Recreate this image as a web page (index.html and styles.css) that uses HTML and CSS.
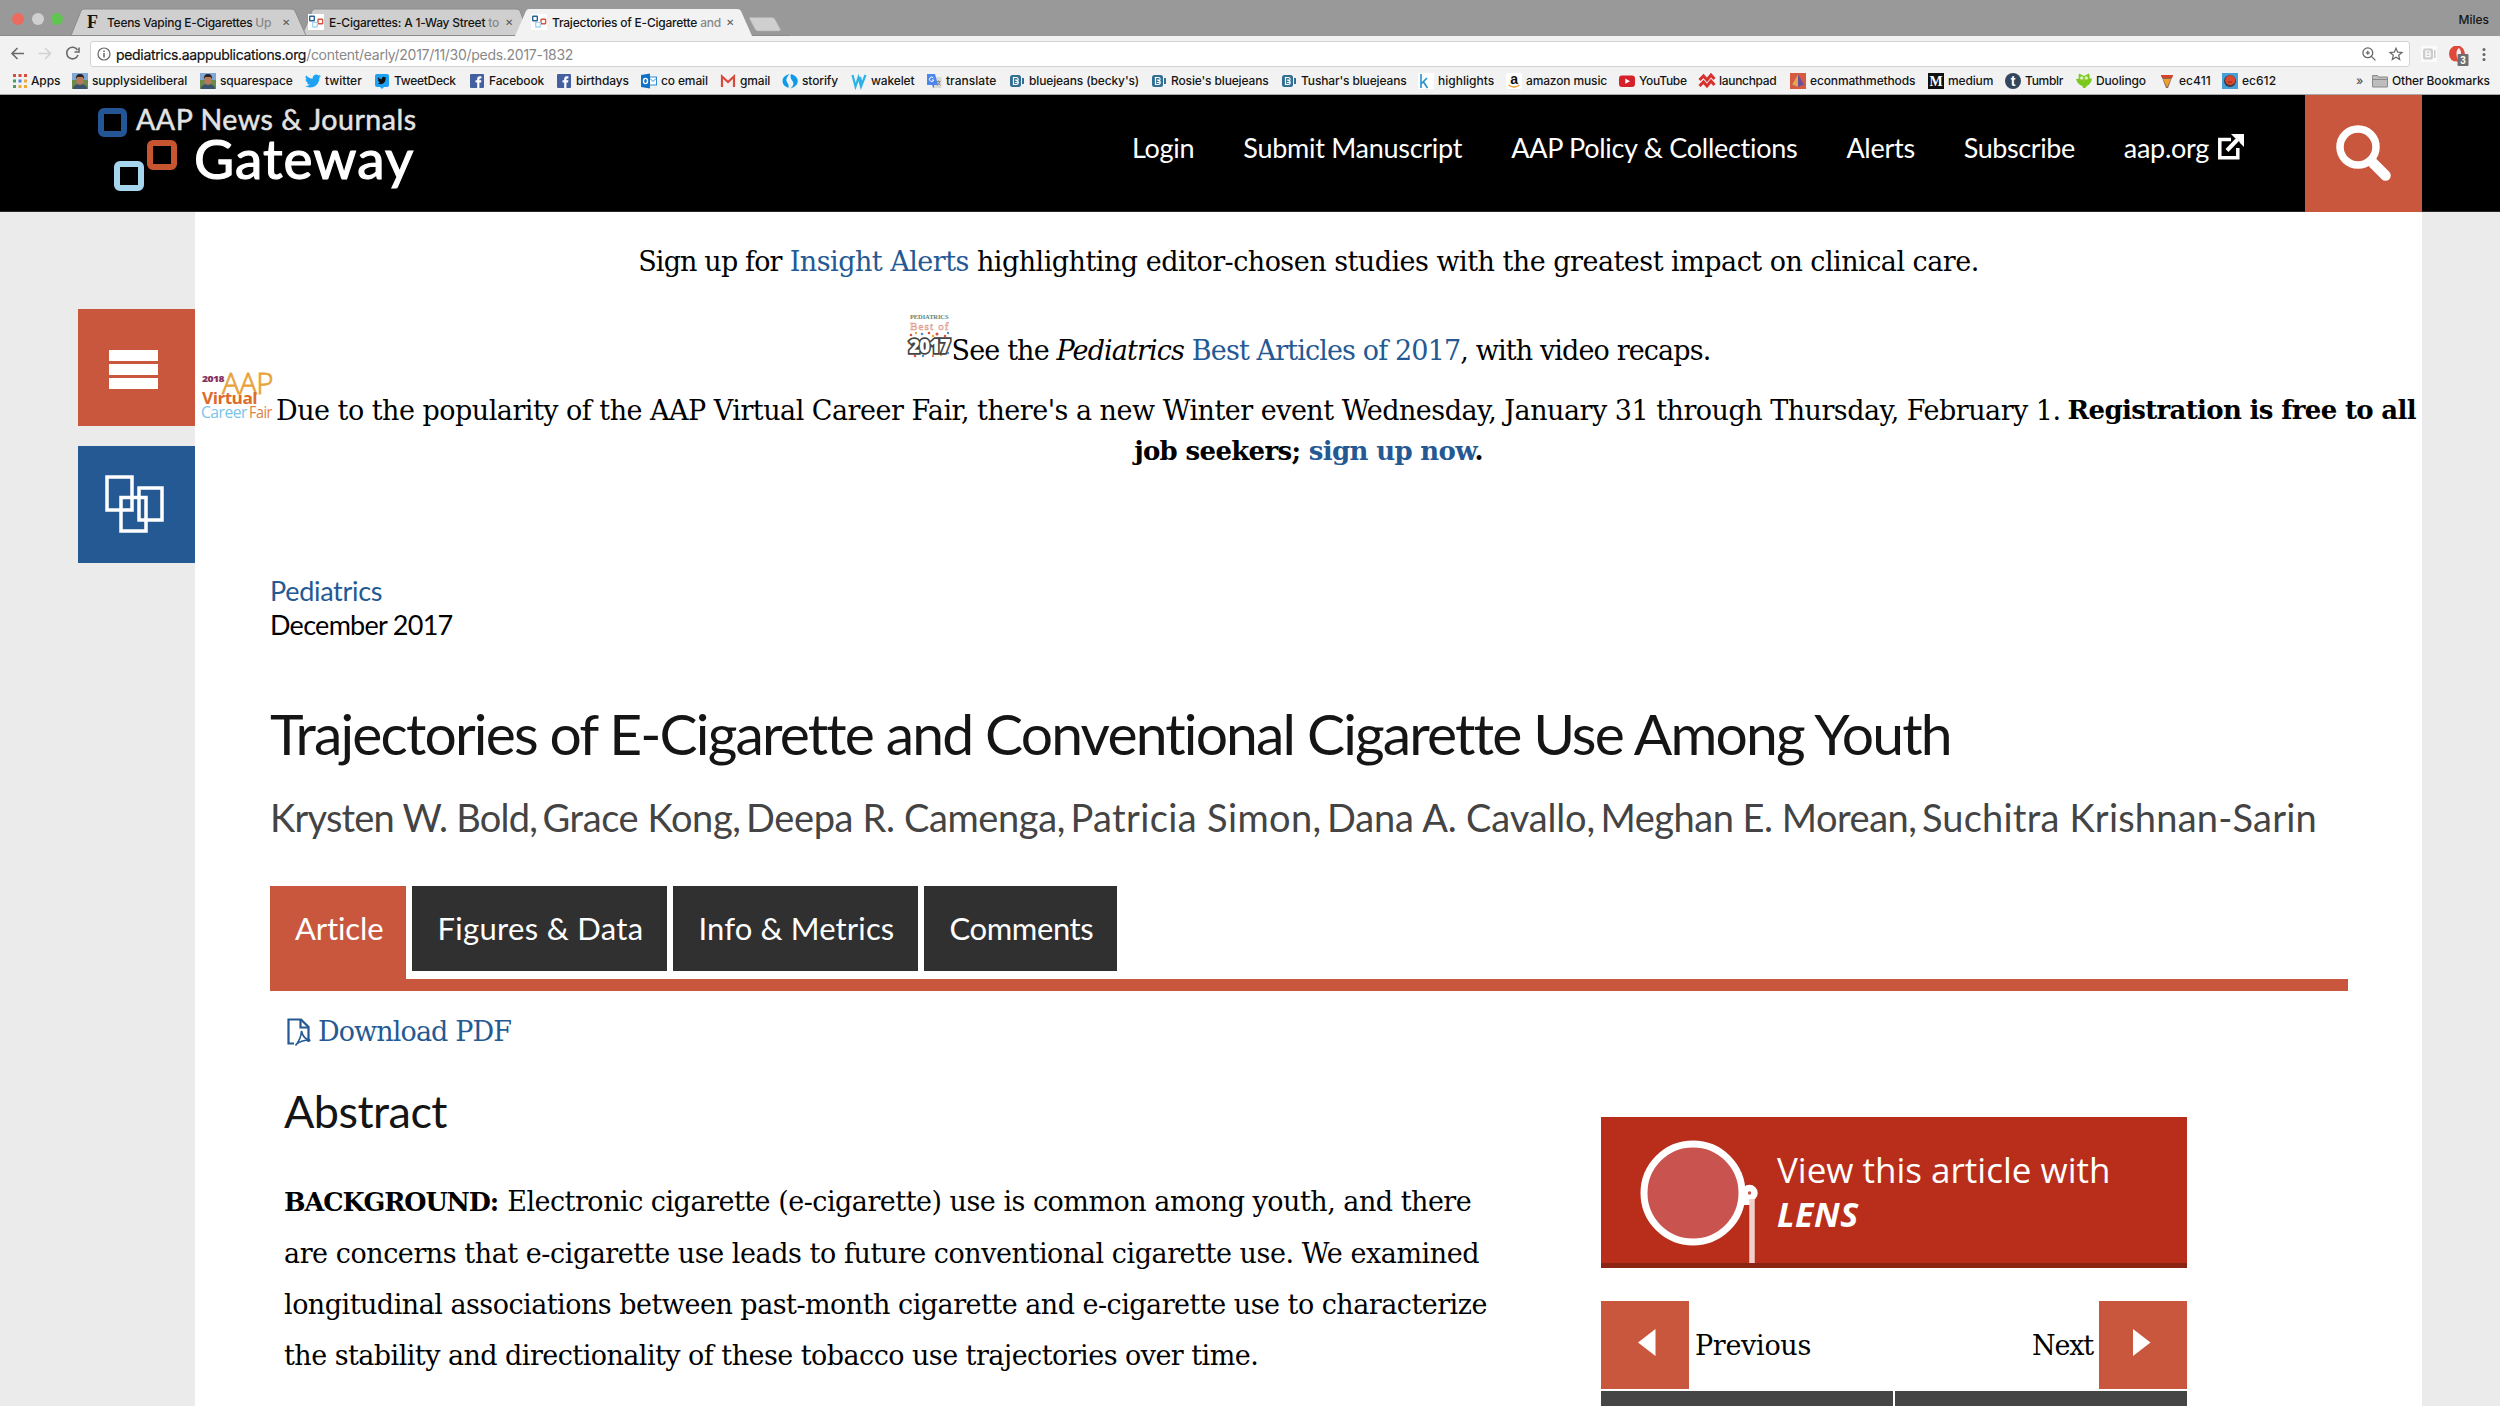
FILE: index.html
```html
<!DOCTYPE html>
<html lang="en">
<head>
<meta charset="utf-8">
<title>Trajectories of E-Cigarette and Conventional Cigarette Use Among Youth</title>
<link rel="stylesheet" href="styles.css">
</head>
<body>
<svg class="defs" width="0" height="0">
  <defs>
    <symbol id="aap" viewBox="0 0 16 16"><rect width="16" height="16" fill="#fff"/><g fill="none" stroke-width="1.4"><rect x="1.7" y="2.2" width="4.6" height="4.6" rx=".5" stroke="#2b6295"/><rect x="10" y="5.2" width="4.6" height="4.6" rx=".5" stroke="#d8543c"/><rect x="4.7" y="8.4" width="4.6" height="4.6" rx=".5" stroke="#a5d8ee"/></g></symbol>
    <symbol id="photo" viewBox="0 0 16 16"><rect width="16" height="9" fill="#7fa8d8"/><rect y="7" width="16" height="9" fill="#6d8a4c"/><path d="M1 16q0-5 7-5t7 5z" fill="#39566e"/><ellipse cx="8" cy="7" rx="3.7" ry="5" fill="#b57a5c"/><path d="M3.8 6.500Q3.500 1 8 1t4.200 5.500L10.800 4H5.200z" fill="#2c2421"/></symbol>
    <symbol id="fb" viewBox="0 0 16 16"><rect x="1" y="1" width="14" height="14" rx="1" fill="#4460a0"/><path d="M8.200 15V9.500H6.500V7.300h1.700V5.800q0-2.500 2.600-2.500h1.600v2.100h-1.200q-.8 0-.8.9v1h2l-.3 2.200h-1.700V15z" fill="#fff"/></symbol>
    <symbol id="bird" viewBox="0 0 24 24"><path d="M23.950 4.600a10 10 0 0 1-2.800.8 4.900 4.900 0 0 0 2.100-2.700 9.800 9.800 0 0 1-3.100 1.200 4.900 4.900 0 0 0-8.400 4.500A14 14 0 0 1 1.600 3.200a4.900 4.900 0 0 0 1.500 6.500 4.900 4.900 0 0 1-2.200-.6v.1a4.900 4.900 0 0 0 4 4.800 5 5 0 0 1-2.200.1 4.900 4.900 0 0 0 4.600 3.400A9.900 9.900 0 0 1 0 19.500 14 14 0 0 0 7.500 21.700c9.100 0 14-7.500 14-14v-.6a10 10 0 0 0 2.450-2.500z"/></symbol>
    <symbol id="bj" viewBox="0 0 16 16"><rect x="1" y="2" width="11" height="12" rx="2.500" fill="#336f94"/><rect x="13" y="5" width="2" height="6" fill="#336f94"/><path d="M4.500 4.500h3a1.500 1.700 0 0 1 .6 3.300 1.700 1.900 0 0 1-.6 3.700h-3zM6 7h2M6 9.500h2.500" fill="none" stroke="#fff" stroke-width="1.200"/></symbol>
  </defs>
</svg>

<div class="tabstrip">
  <div class="lights"><i class="light red"></i><i class="light gray"></i><i class="light green"></i></div>
  <svg class="tabshapes" width="790" height="36" viewBox="0 0 790 36">
    <path d="M299 35.500C303 34 304 30 306 26L312 11q1-2 3-2H516q3 0 4 2l9 24.500z" fill="#cfcfcf" stroke="#8c8c8c"/>
    <path d="M71 35.500L81 11q1-2 3-2H291q3 0 4 2l11 24.500z" fill="#cfcfcf" stroke="#8c8c8c"/>
    <path d="M0 35.500H790" stroke="#8a8a8a"/>
    <path d="M515 36L526 11q1-2 3-2H737q3 0 4 2l11 25z" fill="#f2f2f2"/>
    <path d="M750 17.500h22q2 0 3 2l5 9q1 2.500-1 2.500h-21q-2 0-3-2l-5-9.500q-1-2 0-2z" fill="#cfcfcf" stroke="#b0b0b0" stroke-width=".6"/>
  </svg>
  <div class="tab t1"><span class="ff">F</span><span class="tt">Teens Vaping E-Cigarettes <em>Up</em></span><span class="x">✕</span></div>
  <div class="tab t2"><svg width="16" height="16"><use href="#aap"/></svg><span class="tt">E-Cigarettes: A 1-Way Street <em>to</em></span><span class="x">✕</span></div>
  <div class="tab t3"><svg width="16" height="16"><use href="#aap"/></svg><span class="tt">Trajectories of E-Cigarette <em>and</em></span><span class="x">✕</span></div>
  <span class="user">Miles</span>
</div>

<div class="toolbar">
  <svg class="navicons" width="90" height="30" viewBox="0 0 90 30" fill="none" stroke-width="1.600">
    <path d="M24 17.500H12.500M17.500 12l-5.500 5.500 5.500 5.500" stroke="#6a6a6a"/>
    <path d="M38.500 17.500H50M45 12l5.500 5.500L45 23" stroke="#d2d2d2"/>
    <path d="M77.500 14A5.800 5.800 0 1 0 78 19M79 11.500v4.500h-4.500" stroke="#6a6a6a"/>
  </svg>
  <div class="omnibox">
    <svg width="14" height="14" viewBox="0 0 14 14" fill="none" stroke="#666" stroke-width="1.200"><circle cx="7" cy="7" r="6"/><path d="M7 6v4.500M7 3.500v1.500" stroke-width="1.500"/></svg>
    <span class="url"><b>pediatrics.aappublications.org</b>/content/early/2017/11/30/peds.2017-1832</span>
    <svg class="zoomi" width="14" height="14" viewBox="0 0 14 14" fill="none" stroke="#666" stroke-width="1.300"><circle cx="5.800" cy="5.800" r="4.900"/><path d="M9.400 9.400l4 4M5.800 3.800v4M3.800 5.800h4"/></svg>
    <svg class="star" width="14" height="14" viewBox="0 0 14 14" fill="none" stroke="#666" stroke-width="1.200"><path d="M7 1.200l1.700 4 4.300.3-3.300 2.800 1 4.200L7 10.200l-3.700 2.300 1-4.200L1 5.500l4.300-.3z"/></svg>
  </div>
  <svg class="ext" width="80" height="24" viewBox="0 0 80 24">
    <rect x="9" y="4" width="16" height="16" fill="#fbfbfb"/><rect x="11" y="6.500" width="10" height="11" rx="2" fill="#ccc"/><rect x="22" y="8" width="1.600" height="8" fill="#ccc"/><path d="M14 9h3a1 1.300 0 0 1 0 2.800h-3zM14 11.800h3.300a1 1.300 0 0 1 0 2.800H14z" fill="none" stroke="#fff" stroke-width="1.200"/>
    <path d="M42 4h6q4.500 2.500 5 8h-4q0-4-1.800-6-2.700 1-2.700 5.500 0 6 3 8-10 1-10.500-7.500 0-5.500 5-8z" fill="#e0483a"/><rect x="45.500" y="12" width="11" height="12" rx="1" fill="#6e6e6e"/><text x="51" y="21.500" font-family="Liberation Sans" font-weight="700" font-size="10" fill="#fff" text-anchor="middle">3</text>
    <circle cx="72" cy="7.500" r="1.500" fill="#666"/><circle cx="72" cy="12.500" r="1.500" fill="#666"/><circle cx="72" cy="17.500" r="1.500" fill="#666"/>
  </svg>
</div>

<div class="bookmarks">
  <span class="bm"><svg viewBox="0 0 16 16"><g fill="#dc4a3d"><path d="M1 1h3v3H1zM6.500 1h3v3h-3zM12 1h3v3h-3z"/></g><path d="M1 6.500h3v3H1z" fill="#4a9d5f"/><path d="M6.500 6.500h3v3h-3z" fill="#4a86e8"/><path d="M12 6.500h3v3h-3zM12 12h3v3h-3zM6.500 12h3v3h-3z" fill="#e9a93c"/><path d="M1 12h3v3H1z" fill="#4a9d5f"/></svg>Apps</span>
  <span class="bm"><svg viewBox="0 0 16 16"><use href="#photo"/></svg>supplysideliberal</span>
  <span class="bm"><svg viewBox="0 0 16 16"><use href="#photo"/></svg>squarespace</span>
  <span class="bm wide"><svg viewBox="0 0 16 16" fill="#1da1f2"><use href="#bird"/></svg>twitter</span>
  <span class="bm tight"><svg viewBox="0 0 16 16"><path d="M3 1h10q2 0 2 2v9q0 2-2 2h-3l-2 2-2-2H3q-2 0-2-2V3q0-2 2-2z" fill="#1da1f2"/><use href="#bird" x="3.500" y="3" width="9" height="9" fill="#111"/></svg>TweetDeck</span>
  <span class="bm"><svg viewBox="0 0 16 16"><use href="#fb"/></svg>Facebook</span>
  <span class="bm"><svg viewBox="0 0 16 16"><use href="#fb"/></svg>birthdays</span>
  <span class="bm"><svg viewBox="0 0 16 16"><rect x="8" y="4" width="7.500" height="8" fill="#fff" stroke="#2a8ad4"/><path d="M9 5.500l3 3 3-3" fill="none" stroke="#2a8ad4"/><path d="M0 2l9-1.500v15L0 14z" fill="#0f72c6"/><ellipse cx="4.500" cy="8" rx="2" ry="2.600" fill="none" stroke="#fff" stroke-width="1.400"/></svg>co email</span>
  <span class="bm"><svg viewBox="0 0 16 16"><rect x="1" y="3" width="14" height="11" fill="#f4f0f0"/><path d="M2 14V3.500L8 9l6-5.500V14" fill="none" stroke="#d54b3d" stroke-width="2.200"/></svg>gmail</span>
  <span class="bm"><svg viewBox="0 0 16 16" fill="#0f9bea"><path d="M7.500 1Q0 3 .5 8.500 1 13 6.500 15q1-3-1-5Q2.500 6 7.500 1zM9 1q7 2 6.800 7.500Q15.500 13 8.500 15.500q4.500-4 2-7.500Q7.500 4.500 9 1z"/></svg>storify</span>
  <span class="bm"><svg viewBox="0 0 16 16" fill="none" stroke="#2cb2e6" stroke-width="2.200"><path d="M1.500 2l3 11.500 3-9 2.500 9L14.500 2M9 4l2 8"/></svg>wakelet</span>
  <span class="bm wide"><svg viewBox="0 0 16 16"><rect x="6" y="4" width="9.500" height="11" fill="#d9d9d9"/><path d="M1 1h8l3 11H6l2 3.500V12H1z" fill="#4c86ee"/><path d="M7.300 4.800A2.200 2.200 0 1 0 7.800 7H6" stroke="#fff" fill="none"/><path d="M10.500 8.500h4M12.500 7.500v1M14 8.500q-1 3-3 4M11.500 9.500l3 3" stroke="#777" fill="none" stroke-width=".8"/></svg>translate</span>
  <span class="bm"><svg viewBox="0 0 16 16"><use href="#bj"/></svg>bluejeans (becky's)</span>
  <span class="bm"><svg viewBox="0 0 16 16"><use href="#bj"/></svg>Rosie's bluejeans</span>
  <span class="bm"><svg viewBox="0 0 16 16"><use href="#bj"/></svg>Tushar's bluejeans</span>
  <span class="bm wide k"><svg viewBox="0 0 16 16"><rect width="16" height="16" fill="#fff"/><path d="M3 1v14M3.500 10.500L9 5M5.500 9l4 6" stroke="#2393cf" stroke-width="1.600" fill="none"/></svg>highlights</span>
  <span class="bm"><svg viewBox="0 0 16 16"><rect width="16" height="16" rx="2" fill="#fff"/><text x="8" y="10.500" font-size="14" font-weight="700" font-family="Liberation Sans" text-anchor="middle" fill="#111">a</text><path d="M2.500 12q5.500 4 11 0" stroke="#f29a1f" stroke-width="1.500" fill="none"/></svg>amazon music</span>
  <span class="bm tight"><svg viewBox="0 0 16 16"><rect y="2.500" width="16" height="11.500" rx="3" fill="#d5222a"/><path d="M6.300 5.500v5.300L11 8.200z" fill="#fff"/></svg>YouTube</span>
  <span class="bm tight"><svg viewBox="0 0 16 16" fill="none" stroke="#d8302d" stroke-width="3"><path d="M.5 7l4-4 3.500 4 4-5 3.500 4M.5 13l4-4 3.500 4 4-5 3.500 4"/></svg>launchpad</span>
  <span class="bm"><svg viewBox="0 0 16 16"><rect width="16" height="16" fill="#d65a40"/><path d="M8 1.500l6 10L8 14l-6-2.500z" fill="#6a4fa0"/><path d="M8 1.500L2 11.500 8 14z" fill="#e9a447"/></svg>econmathmethods</span>
  <span class="bm"><svg viewBox="0 0 16 16"><rect width="16" height="16" fill="#111"/><text x="8" y="13" font-size="14" font-weight="700" font-family="Liberation Serif" text-anchor="middle" fill="#fff">M</text></svg>medium</span>
  <span class="bm tight"><svg viewBox="0 0 16 16"><circle cx="8" cy="8" r="8" fill="#35465c"/><text x="8" y="13" font-size="14" font-weight="700" font-family="Liberation Sans" text-anchor="middle" fill="#fff">t</text></svg>Tumblr</span>
  <span class="bm"><svg viewBox="0 0 16 16"><path d="M3 .5L8 3l5-2.500q1 2.500.5 5L16 5.500Q15 11 11.500 12.500L9 15H7l-.5-2Q1.500 11.500 0 6l3-.5Q2 3 3 .5z" fill="#79c91e"/><circle cx="5.700" cy="5" r="1.800" fill="#d9f2b8"/><circle cx="10.300" cy="5" r="1.800" fill="#d9f2b8"/><path d="M7 6.500h2L8 8.500z" fill="#f5a623"/></svg>Duolingo</span>
  <span class="bm wide"><svg viewBox="0 0 16 16"><path d="M2 2h12L9 15H7z" fill="#8a6a55"/><path d="M4 6h8l-4 8z" fill="#f0a030"/><path d="M2 2h12l-1 3H3z" fill="#d5432e"/></svg>ec411</span>
  <span class="bm wide"><svg viewBox="0 0 16 16"><rect width="16" height="16" fill="#45a0d8"/><circle cx="8" cy="8" r="6" fill="#3a3a48"/><circle cx="8.300" cy="7.300" r="5" fill="#d9472c"/><path d="M6 9h4" stroke="#8c2a1c"/></svg>ec612</span>
  <span class="more">»</span>
  <span class="bm"><svg viewBox="0 0 16 16"><path d="M.5 4.500v-2h5l1 1.500h9v10H.5z" fill="#bdbdbd" stroke="#8a8a8a"/><path d="M.5 6.500h15" stroke="#8a8a8a"/></svg>Other Bookmarks</span>
</div>

<header class="site">
  <a class="logo">
    <svg width="90" height="94" viewBox="0 0 90 94" fill="none" stroke-width="6"><rect x="8" y="10" width="23" height="23" rx="3" stroke="#245595"/><rect x="57" y="42" width="24" height="24" rx="3" stroke="#c7552f"/><rect x="24" y="63" width="24" height="24" rx="3" stroke="#a6d5ee"/></svg>
    <span class="l1">AAP News &amp; Journals</span>
    <span class="l2">Gateway</span>
  </a>
  <nav>
    <a>Login</a><a>Submit Manuscript</a><a>AAP Policy &amp; Collections</a><a>Alerts</a><a class="sub">Subscribe</a><a>aap.org</a>
    <svg width="28" height="28" viewBox="0 0 28 28" fill="none" stroke="#fff" stroke-width="3.500"><path d="M14 6.500H2.800v18.200h18V15"/><path d="M10 17.500L21 6" stroke-width="4"/><path d="M14 1h13v13l-4-4-2-4-3-1z" fill="#fff" stroke="none"/></svg>
  </nav>
  <button class="search"><svg width="60" height="60" viewBox="0 0 60 60" fill="none" stroke="#fff"><circle cx="24" cy="24" r="18" stroke-width="7.500"/><path d="M38 39l13.500 13.500" stroke-width="10.500" stroke-linecap="round"/></svg></button>
</header>

<div class="body">
  <aside>
    <button class="side menu"><svg width="49" height="39" fill="#fff"><path d="M0 0h49v11H0zM0 14h49v11H0zM0 28h49v11H0z"/></svg></button>
    <button class="side stack"><svg width="58" height="60" viewBox="0 0 58 60" fill="none" stroke="#fff" stroke-width="3.500"><path d="M2 2h25v33H2zM16 22.500h25V56H16zM34 13h23v32H34z"/></svg></button>
  </aside>
  <main>
    <div class="banner">
      <p class="n1"><span class="sign">Sign up for</span><a>Insight Alerts</a><span>highlighting editor-chosen studies with the greatest impact on clinical care.</span></p>
      <p class="n2">
        <svg width="45" height="46" viewBox="0 0 45 46"><text x="22" y="6" font-size="6.500" font-family="Liberation Serif" fill="#5f8377" text-anchor="middle" textLength="38" font-weight="700">PEDIATRICS</text><text x="22" y="17" font-size="11" font-family="Liberation Serif" text-anchor="middle" fill="#fff" stroke="#dc9a8a" stroke-width=".6" textLength="38">Best of</text><g fill="#dc5040"><circle cx="4" cy="22" r="1.300"/><circle cx="22" cy="20" r="1.300"/><circle cx="30" cy="21" r="1.500"/><circle cx="38" cy="23" r="1.300"/><circle cx="8" cy="43" r="1.300"/><circle cx="26" cy="43" r="1"/></g><g fill="#e9a23a"><circle cx="9" cy="20" r="1.200"/><circle cx="26" cy="23" r="1.300"/><circle cx="2" cy="30" r="1.300"/><circle cx="34" cy="42" r="1.200"/></g><g fill="#4a90d0"><circle cx="15" cy="21" r="1.300"/><circle cx="41" cy="20" r="1.200"/><circle cx="3" cy="38" r="1.300"/><circle cx="16" cy="43" r="1.200"/><circle cx="41" cy="40" r="1.200"/></g><text x="22.500" y="39.500" font-size="19" font-family="Open Sans" font-weight="800" fill="#fff" stroke="#444" stroke-width="3.500" paint-order="stroke" text-anchor="middle" textLength="41" lengthAdjust="spacingAndGlyphs">2017</text></svg><span class="see">See the <i>Pediatrics</i> <a>Best Articles of 2017</a>, with video recaps.</span>
      </p>
      <p class="n3">
        <svg width="72" height="47" viewBox="0 0 72 47"><text x="1" y="10" font-size="9.500" font-family="Open Sans" font-weight="800" fill="#86325f" textLength="22" lengthAdjust="spacingAndGlyphs">2018</text><text x="21" y="22" font-size="29" font-family="Open Sans" font-weight="300" fill="#e8a33c" stroke="#e8a33c" stroke-width=".8" textLength="51" lengthAdjust="spacingAndGlyphs">AAP</text><text x="1" y="32" font-size="16" font-family="Open Sans" font-weight="700" fill="#dd6b2a" textLength="55" lengthAdjust="spacingAndGlyphs">Virtual</text><text x="0" y="46" font-size="16.500" font-family="Open Sans" fill="#79c4e8" textLength="46" lengthAdjust="spacingAndGlyphs">Career</text><text x="48" y="46" font-size="16.500" font-family="Open Sans" fill="#e0803c" textLength="23" lengthAdjust="spacingAndGlyphs">Fair</text></svg><span>Due to the popularity of the AAP Virtual Career Fair, there's a new Winter event Wednesday, January 31 through Thursday, February 1.</span><strong>Registration is free to all</strong>
      </p>
      <p class="n4"><strong>job seekers; <a>sign up now</a>.</strong></p>
    </div>

    <div class="article">
      <div class="meta"><a>Pediatrics</a><span>December 2017</span></div>
      <h1>Trajectories of E-Cigarette and Conventional Cigarette Use Among Youth</h1>
      <div class="authors"><span>Krysten W. Bold,</span><span>Grace Kong,</span><span>Deepa R. Camenga,</span><span>Patricia Simon,</span><span>Dana A. Cavallo,</span><span>Meghan E. Morean,</span><span>Suchitra Krishnan-Sarin</span></div>
      <div class="tabs"><a class="on">Article</a><a class="fig">Figures &amp; Data</a><a class="info">Info &amp; Metrics</a><a class="com">Comments</a></div>
      <div class="cols">
        <section>
          <a class="pdf"><svg width="25" height="29" viewBox="0 0 25 29" fill="none" stroke="#245993" stroke-width="2.200"><path d="M7 25.500H1.500V1.500H14L21.500 9v15"/><path d="M13.500 2v7.500H21"/><path d="M8.500 27.500Q14 21 14.500 13q1.500 8 9 9.500-8-1-14 3.500" stroke-width="1.600"/></svg><span>Download PDF</span></a>
          <h2>Abstract</h2>
          <div class="abs">
            <div class="r1"><strong>BACKGROUND:</strong><span>Electronic cigarette (e-cigarette) use is common among youth, and there</span></div>
            <div class="r2">are concerns that e-cigarette use leads to future conventional cigarette use. We examined</div>
            <div class="r3">longitudinal associations between past-month cigarette and e-cigarette use to characterize</div>
            <div class="r4">the stability and directionality of these tobacco use trajectories over time.</div>
          </div>
        </section>
        <section class="right">
          <a class="lens"><svg width="130" height="122" viewBox="0 0 130 122"><circle cx="58" cy="52" r="49" fill="#c9544f" stroke="#fff" stroke-width="7"/><circle cx="114.500" cy="52" r="5" fill="#c9544f" stroke="#fff" stroke-width="6.500"/><path d="M109 44v20l8 0" fill="#fff"/><path d="M117 58V122" stroke="#f3cfca" stroke-width="5.500"/></svg><span class="lt"><span>View this article with</span><strong>LENS</strong></span></a>
          <div class="pager"><span class="sq"><svg width="18" height="28"><path d="M17.500 0v27L0 13.500z" fill="#fff"/></svg></span><span class="pv">Previous</span><span class="nx">Next</span><span class="sq"><svg width="18" height="28"><path d="M0 0v27L17.500 13.500z" fill="#fff"/></svg></span></div>
          <div class="bars"><i></i><i></i></div>
        </section>
      </div>
    </div>
  </main>
</div>
</body>
</html>
```
FILE: styles.css
```css
* { box-sizing: border-box; }
body { margin: 0; width: 2500px; height: 1406px; overflow: hidden; background: #ebebeb; font-family: "DejaVu Serif", serif; color: #000; white-space: nowrap; position: relative; }
p, h1, h2 { margin: 0; }
button { border: 0; padding: 0; }
svg { display: block; flex: none; overflow: visible; }
a { color: #245993; }
.defs { position: absolute; }

/* browser window */
.tabstrip { position: relative; height: 36px; background: #999; font: 500 12px Inter, sans-serif; color: #151515; }
.tabshapes { position: absolute; left: 0; top: 0; }
.lights { position: absolute; left: 12px; top: 13px; display: flex; gap: 7.500px; }
.light { width: 12px; height: 12px; border-radius: 50%; }
.red { background: #ec6a5e; }
.gray { background: #d0d0d0; }
.green { background: #61c554; }
.tab { position: absolute; top: 9px; height: 26px; display: flex; align-items: center; }
.t1 { left: 87px; }
.t2 { left: 308px; }
.t3 { left: 531px; }
.tab .ff { width: 20px; font: 700 18px "Liberation Serif", serif; }
.tab svg { margin-right: 5px; }
.tab .tt { width: 172px; letter-spacing: -.23px; }
.tab em { font-style: normal; color: #888; }
.tab .x { font: 10px "DejaVu Sans", sans-serif; color: #555; width: 10px; margin-left: 2px; }
.t1 .tt { width: 173px; letter-spacing: -.28px; }
.t2 .x { margin-left: 4px; }
.user { position: absolute; right: 11px; top: 12px; }

.toolbar { height: 34px; background: #f2f2f2; display: flex; align-items: flex-start; }
.omnibox { width: 2320px; height: 26px; margin-top: 5px; background: #fff; border: 1px solid #d2d2d2; border-radius: 3px; display: flex; align-items: center; padding: 0 6px; font: 14px Inter, sans-serif; }
.url { margin-left: 5px; flex: 1; color: #888; letter-spacing: -.28px; }
.url b { color: #111; font-weight: 400; letter-spacing: -.33px; -webkit-text-stroke: .2px #111; }
.star { margin-left: 13px; }
.ext { margin-top: 6px; margin-left: 2px; }

.bookmarks { height: 25px; background: #f2f2f2; border-bottom: 1px solid #a8a8a8; padding: 0 0 3px 12px; display: grid; grid-template-columns: 60px 128px 105px 69px 95px 87px 85px 79px 62px 69px 75px 83px 142px 130px 138px 87px 113px 80px 91px 138px 77px 71px 83px 63px 134px 16px 128px; font: 500 12px Inter, sans-serif; letter-spacing: -.14px; color: #151515; }
.bm { display: flex; align-items: center; gap: 4px; }
.bm svg { width: 16px; height: 16px; }
.bm:first-child { gap: 3px; }
.bm.wide { letter-spacing: .03px; }
.bm.tight { letter-spacing: -.3px; }
.bm.k { margin-left: -1px; }
.more { align-self: center; color: #555; }

/* site header */
.site { height: 117px; background: #000; display: flex; justify-content: flex-end; position: relative; font-family: Lato, sans-serif; border-bottom: 1px solid #2a2626; }
.logo { position: absolute; left: 93px; top: 6px; color: #fff; }
.logo span { position: absolute; line-height: 60px; }
.l1 { left: 43px; top: -12px; font-size: 28.500px; letter-spacing: .55px; color: #e3e3e3; -webkit-text-stroke: .5px #e3e3e3; }
.l2 { left: 101px; top: 27px; font-size: 55px; letter-spacing: 1px; -webkit-text-stroke: 1.200px #fff; }
.site nav { display: flex; font-size: 27px; line-height: 105px; margin-right: 60px; letter-spacing: -.28px; }
.site nav a { color: #fff; margin-left: 49px; }
.site nav .sub { letter-spacing: -.43px; }
.site nav svg { margin: 38px 0 0 8px; }
.search { width: 117px; height: 117px; background: #c9573e; margin-right: 78px; display: flex; padding: 28px 0 0 29px; }

/* page */
.body { display: flex; }
aside { width: 195px; padding-top: 97px; display: flex; flex-direction: column; align-items: flex-end; gap: 20px; }
.side { width: 117px; height: 117px; display: flex; }
.menu { background: #c9573e; padding: 41px 0 0 31px; }
.stack { background: #245993; padding: 29px 0 0 27px; }
main { width: 2227px; height: 1194px; background: #fff; }
.banner { padding-top: 29px; height: 368px; font-size: 27px; letter-spacing: -.51px; }
.banner p { height: 41px; line-height: 41px; display: flex; justify-content: center; align-items: flex-end; }
.banner strong { font-size: 26px; letter-spacing: -.66px; }
.n1 { gap: 8px; }
.n1 .sign { letter-spacing: -.85px; }
.n2 { margin-top: 48px; }
.n2 .see { letter-spacing: -.87px; }
.n2 svg { margin-bottom: 12px; }
.n3 { margin-top: 19px; }
.n3 svg { margin: 0 3px 12px 0; }
.n3 strong { margin-left: 7px; }

.article { padding-left: 75px; }
.meta { font: 27px/34px Lato, sans-serif; letter-spacing: -.3px; display: flex; flex-direction: column; align-items: flex-start; margin-top: -6px; }
.meta span { letter-spacing: -.72px; }
h1 { font: 400 57px/70px Lato, sans-serif; letter-spacing: -1.840px; color: #151515; margin-top: 56px; }
.authors { font: 38px/50px Lato, sans-serif; color: #444; display: flex; gap: 5.500px; margin-top: 24px; }
.authors :nth-child(1) { letter-spacing: -.78px; }
.authors :nth-child(2) { letter-spacing: -.39px; }
.authors :nth-child(3) { letter-spacing: -.37px; }
.authors :nth-child(4) { letter-spacing: .37px; }
.authors :nth-child(5) { letter-spacing: -.15px; }
.authors :nth-child(6) { letter-spacing: -.49px; }
.authors :nth-child(7) { letter-spacing: .21px; }
.tabs { width: 2078px; height: 105px; border-bottom: 12px solid #c9573e; margin-top: 44px; display: flex; gap: 6px; font: 31px/85px Lato, sans-serif; letter-spacing: -.11px; }
.tabs a { height: 85px; background: #303030; color: #fff; padding: 0 24px 0 25px; }
.tabs .on { background: #c9573e; height: 95px; padding-right: 23px; }
.tabs .fig { letter-spacing: .31px; }
.tabs .info { letter-spacing: .14px; }
.tabs .com { letter-spacing: -.37px; }
.cols { display: flex; }
.cols section { width: 1331px; padding-left: 14px; }
.pdf { display: flex; align-items: center; gap: 6px; font-size: 27px; line-height: 40px; letter-spacing: -.9px; margin: 21px 0 0 3px; }
h2 { font: 400 45px/60px Lato, sans-serif; letter-spacing: -.53px; color: #151515; margin-top: 29px; }
.abs { font-size: 27px; line-height: 51px; margin-top: 35px; }
.abs strong { font-size: 25.500px; letter-spacing: -1.080px; margin-right: 9px; }
.abs .r1 { letter-spacing: -.5px; }
.abs .r2 { letter-spacing: -.45px; }
.abs .r3 { letter-spacing: -.51px; }
.abs .r4 { letter-spacing: -.54px; }
.cols .right { padding: 126px 0 0; width: 586px; }
.lens { display: flex; height: 151px; background: #b92d1b; border-bottom: 5px solid #8c2413; padding: 24px 0 0 34px; color: #fff; font: 400 35px/44px "Open Sans", sans-serif; }
.lt { display: flex; flex-direction: column; align-items: flex-start; margin: 7px 0 0 12px; }
.lt strong { font-weight: 700; font-style: italic; font-size: 34px; letter-spacing: .5px; }
.pager { display: flex; align-items: center; margin-top: 33px; height: 88px; font-size: 27px; letter-spacing: -.31px; }
.pager .pv { margin-left: 6px; }
.pager .nx { margin: 0 6px 0 auto; letter-spacing: -1.170px; }
.sq { width: 88px; height: 88px; background: #c9573e; display: flex; padding: 28px 0 0 37px; }
.sq:last-child { padding-left: 34px; }
.bars { display: flex; gap: 2px; margin-top: 2px; }
.bars i { flex: 1; height: 20px; background: #454545; }
```
